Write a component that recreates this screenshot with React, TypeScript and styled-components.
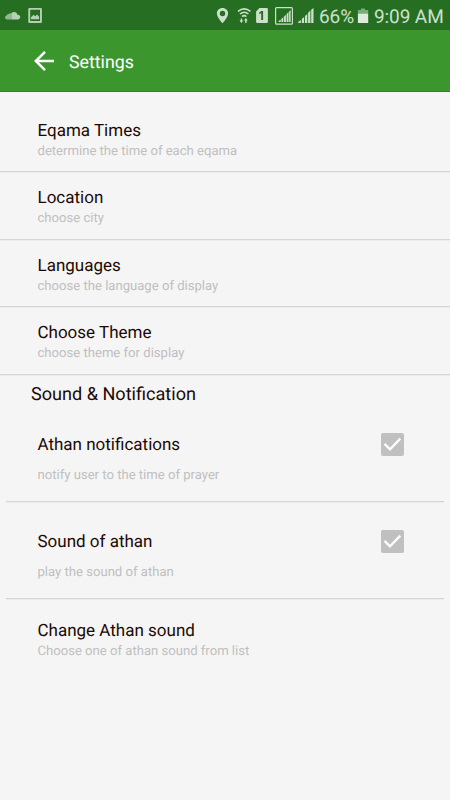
import React from "react";
import styled, { createGlobalStyle } from "styled-components";

const GlobalStyle = createGlobalStyle`
  * { box-sizing: border-box; }
  body {
    margin: 0;
    background: #f5f5f5;
    font-family: Roboto, sans-serif;
    text-rendering: geometricPrecision;
  }
`;

const Screen = styled.main`
  width: 450px;
  height: 800px;
  overflow: hidden;
  background: #f5f5f5;
`;

const StatusBar = styled.div`
  height: 30px;
  display: flex;
  justify-content: space-between;
  background: #266f22;
  color: #cde0cc;
`;

const StatusIcons = styled.svg`
  display: block;
  height: 30px;
  flex: none;
`;

const StatusRight = styled.div`
  display: flex;
  align-items: center;
  width: 236px;
`;

const StatusText = styled.span<{ $width: number; $spacing: number }>`
  width: ${(p) => p.$width}px;
  flex: none;
  font-size: 19px;
  line-height: 30px;
  padding-top: 3px;
  white-space: nowrap;
  letter-spacing: ${(p) => p.$spacing}px;
`;

const AppBar = styled.header`
  height: 62px;
  display: flex;
  align-items: center;
  padding-left: 33px;
  background: #3c962e;
  border-bottom: 1px solid #258d16;
  color: #fff;
`;

const BackButton = styled.button`
  width: 36px;
  height: 24px;
  display: flex;
  align-items: center;
  justify-content: flex-start;
  padding: 1px 0 0;
  border: 0;
  background: none;
  color: inherit;
`;

const AppTitle = styled.h1`
  margin: 5px 0 0;
  font-size: 17.8px;
  line-height: 24px;
  font-weight: 400;
`;

const Row = styled.div<{ $height: number; $top: number }>`
  height: ${(p) => p.$height}px;
  padding: ${(p) => p.$top}px 46px 0 37.5px;
  display: flex;
  justify-content: space-between;
  align-items: flex-start;
`;

const Divider = styled.hr<{ $inset?: boolean }>`
  height: 1px;
  border: 0;
  margin: 0 ${(p) => (p.$inset ? 6 : 0)}px;
  background: #d5d5d5;
  box-shadow: 0 1px 0 #ececec;
`;

const Labels = styled.div<{ $gap: number }>`
  display: flex;
  flex-direction: column;
  gap: ${(p) => p.$gap}px;
`;

const Title = styled.span`
  font-size: 17px;
  line-height: 20px;
  color: #1b0903;
`;

const Summary = styled.span`
  font-size: 13.1px;
  line-height: 16px;
  color: #c0c0c0;
`;

const SectionTitle = styled.h2`
  height: 41px;
  margin: 0;
  padding: 10px 0 0 31px;
  font-size: 18.1px;
  line-height: 20px;
  font-weight: 400;
  color: #1b0903;
`;

const Box = styled.span`
  width: 23px;
  height: 23px;
  margin-top: -2px;
  border-radius: 2px;
  background: #c0c0c0;
  svg { display: block; }
`;

function CheckedBox() {
  return (
    <Box role="checkbox" aria-checked="true">
      <svg width="23" height="23" viewBox="0 0 23 23" fill="none" stroke="#fbfbfb" strokeWidth="2.4">
        <path d="M3.5 10.8 9 16.3 19.3 5.7" />
      </svg>
    </Box>
  );
}

interface SettingProps {
  title: string;
  summary: string;
  height: number;
  top: number;
  gap?: number;
  checked?: boolean;
}

function Setting({ title, summary, height, top, gap = 3, checked }: SettingProps) {
  return (
    <Row $height={height} $top={top}>
      <Labels $gap={gap}>
        <Title>{title}</Title>
        <Summary>{summary}</Summary>
      </Labels>
      {checked && <CheckedBox />}
    </Row>
  );
}

function NotificationIcons() {
  return (
    <StatusIcons width="60" viewBox="0 0 60 30" fill="#b5d0b3">
      <path opacity=".75" d="M5 17.4q0-1.6 1.5-2 .6-1.3 2-1.4 1-.8 2.3-.6.6-.7 1.2-1v7.2H7.2Q5 19.4 5 17.4z" />
      <path d="M12 12.6c2.3-1.4 5.1-.2 5.5 2.3 3.3-.5 3.7 4.3.7 4.6H12z" />
      <path fillRule="evenodd" d="M29.3 8h11.6q1 0 1 1V22q0 1-1 1H29.3q-1 0-1-1V9q0-1 1-1zm.9 1.8v11.3h9.8V9.8z" />
      <path d="M31 19.2v-2l2.6-2.4 1.5 1.4 2-1.7 2 2.2v2.5z" />
    </StatusIcons>
  );
}

function SignalIcons() {
  return (
    <StatusIcons width="105" viewBox="214 0 105 30" fill="#cde0cc">
      <path fillRule="evenodd" d="M222.5 8c-3.3 0-5.6 2.4-5.6 5.5 0 3.9 5.6 9.8 5.6 9.8s5.6-5.9 5.6-9.8c0-3.1-2.3-5.5-5.6-5.5zm0 2.8a2.7 2.7 0 1 1 0 5.4 2.7 2.7 0 0 1 0-5.4z" />
      <g fill="none" stroke="#cde0cc" strokeWidth="1.6">
        <path d="M238 11.3q6.2-5 12.4 0M240 14q4.2-3.5 8.4 0M242 16.5q2.2-1.9 4.4 0" />
      </g>
      <path d="M240.7 18.5h1.4v2h1.2l-1.9 2.6-1.9-2.6h1.2zM245.2 23h1.4v-2.4h1.2l-1.9-2.6-1.9 2.6h1.2z" />
      <path d="M259.5 8h7.2q1.2 0 1.2 1.2v12.6q0 1.2-1.2 1.2h-9.4q-1.2 0-1.2-1.2V11.4z" />
      <path fill="#266f22" d="M261.3 11h1.8v9h-1.9v-6.7l-2 .8v-1.7z" />
      <rect x="275.6" y="7.6" width="16.8" height="16.6" rx="1" fill="none" stroke="#cde0cc" strokeWidth="1.2" />
      <path d="M278.7 22v-1.1l2-1.5V22zM281.4 22v-3.2l1.9-1.6V22zM284 22v-5.4l1.9-1.8V22zM286.6 22v-8l1.9-1.9V22zM289.1 22V11.4l1.5-1.5V22z" />
      <path d="M298.3 23v-1.2l2.5-1.9V23zM301.8 23v-4l2.3-2V23zM305 23v-7l2.3-2v9zM308.1 23v-10.2l2.3-2.2V23zM311.2 23V9.8l2.3-1.8v15z" />
    </StatusIcons>
  );
}

export default function App() {
  return (
    <Screen>
      <GlobalStyle />
      <StatusBar>
        <NotificationIcons />
        <StatusRight>
          <SignalIcons />
          <StatusText $width={37} $spacing={-0.1}>66%</StatusText>
          <StatusIcons width="18" viewBox="356 0 18 30">
            <path d="M361 8.5h4V10h3.2v3.5h-10.3V10H361z" fill="#7dab7a" />
            <path d="M357.9 13.5h10.3V23h-10.3z" fill="#deebdd" />
          </StatusIcons>
          <StatusText $width={76} $spacing={-0.1}>9:09 AM</StatusText>
        </StatusRight>
      </StatusBar>
      <AppBar>
        <BackButton aria-label="Back">
          <svg width="22" height="22" viewBox="0 0 22 22" fill="none" stroke="#fff" strokeWidth="2.5">
            <path d="M21 11H2.8M12 1.8 2.8 11l9.2 9.2" />
          </svg>
        </BackButton>
        <AppTitle>Settings</AppTitle>
      </AppBar>
      <Setting title="Eqama Times" summary="determine the time of each eqama" height={79} top={29} />
      <Divider />
      <Setting title="Location" summary="choose city" height={67} top={16} />
      <Divider />
      <Setting title="Languages" summary="choose the language of display" height={66} top={16} />
      <Divider />
      <Setting title="Choose Theme" summary="choose theme for display" height={67} top={16} />
      <Divider />
      <SectionTitle>Sound &amp; Notification</SectionTitle>
      <Setting title="Athan notifications" summary="notify user to the time of prayer" height={85} top={19} gap={13} checked />
      <Divider $inset />
      <Setting title="Sound of athan" summary="play the sound of athan" height={96} top={30} gap={13} checked />
      <Divider $inset />
      <Setting title="Change Athan sound" summary="Choose one of athan sound from list" height={80} top={22} />
    </Screen>
  );
}
